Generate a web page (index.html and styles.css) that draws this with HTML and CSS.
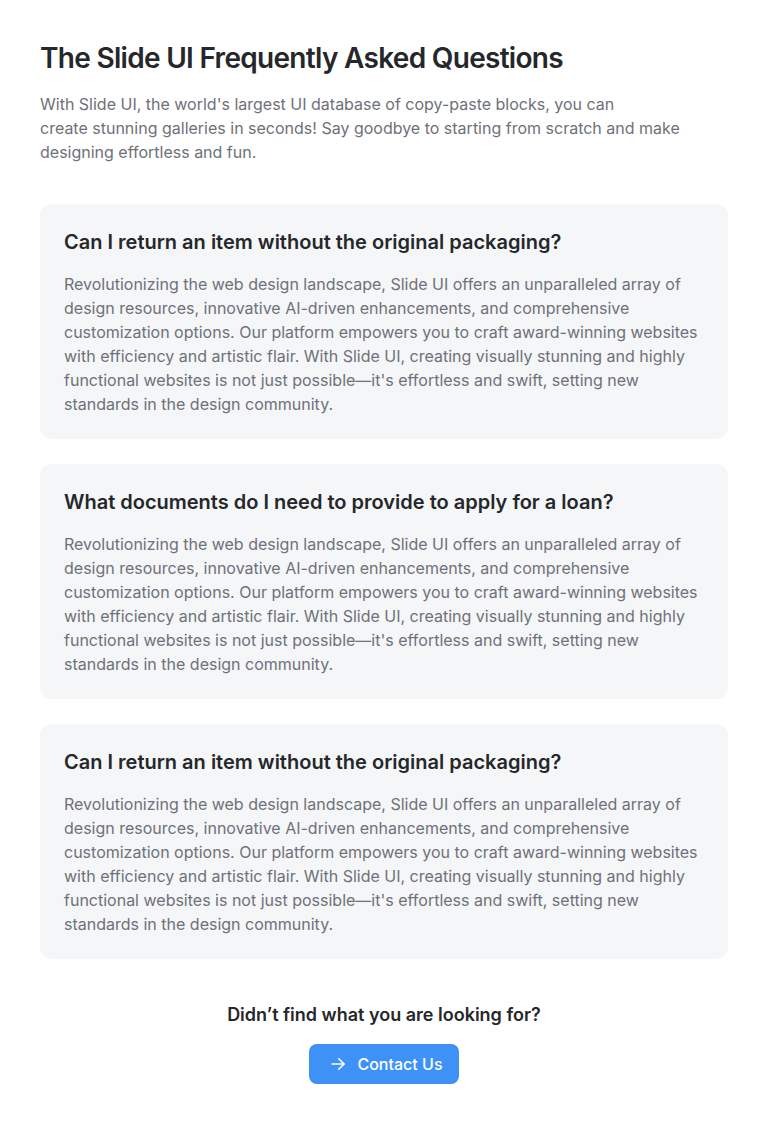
FILE: index.html
```html
<!DOCTYPE html>
<html lang="en">
<head>
<meta charset="utf-8">
<title>FAQ</title>
<link rel="stylesheet" href="styles.css">
</head>
<body>
<main class="page">
  <header class="intro">
    <h1 class="title">The Slide UI Frequently Asked Questions</h1>
    <p class="lead">With Slide UI, the world's largest UI database of copy-paste blocks, you can<br>create stunning galleries in seconds! Say goodbye to starting from scratch and make designing effortless and fun.</p>
  </header>
  <section class="faq-list">
    <article class="faq">
      <h2 class="faq-q">Can I return an item without the original packaging?</h2>
      <p class="faq-a">Revolutionizing the web design landscape, Slide UI offers an unparalleled array of design resources, innovative AI-driven enhancements, and comprehensive customization options. Our platform empowers you to craft award-winning websites with efficiency and artistic flair. With Slide UI, creating visually stunning and highly functional websites is not just possible—it's effortless and swift, setting new standards in the design community.</p>
    </article>
    <article class="faq">
      <h2 class="faq-q">What documents do I need to provide to apply for a loan?</h2>
      <p class="faq-a">Revolutionizing the web design landscape, Slide UI offers an unparalleled array of design resources, innovative AI-driven enhancements, and comprehensive customization options. Our platform empowers you to craft award-winning websites with efficiency and artistic flair. With Slide UI, creating visually stunning and highly functional websites is not just possible—it's effortless and swift, setting new standards in the design community.</p>
    </article>
    <article class="faq">
      <h2 class="faq-q">Can I return an item without the original packaging?</h2>
      <p class="faq-a">Revolutionizing the web design landscape, Slide UI offers an unparalleled array of design resources, innovative AI-driven enhancements, and comprehensive customization options. Our platform empowers you to craft award-winning websites with efficiency and artistic flair. With Slide UI, creating visually stunning and highly functional websites is not just possible—it's effortless and swift, setting new standards in the design community.</p>
    </article>
  </section>
  <footer class="cta">
    <p class="cta-text">Didn’t find what you are looking for?</p>
    <a class="cta-btn" href="#">
      <svg class="cta-icon" width="18" height="18" viewBox="0 0 24 24" fill="none" stroke="currentColor" stroke-width="2.2" stroke-linecap="round" stroke-linejoin="round"><path d="M4 12h16"/><path d="M13 5l7 7-7 7"/></svg>
      <span>Contact Us</span>
    </a>
  </footer>
</main>
</body>
</html>
```
FILE: styles.css
```css
* { box-sizing: border-box; }
html, body { margin: 0; padding: 0; background: #ffffff; }
body {
  font-family: Inter, "Noto Sans", "Liberation Sans", sans-serif;
  color: #25272b;
}
.page {
  padding: 40px 40px 40px;
  display: flex;
  flex-direction: column;
}
.title {
  margin: 0;
  font-size: 28px;
  line-height: 36px;
  font-weight: 600;
  color: #25272b;
  letter-spacing: -0.7px;
}
.lead {
  margin: 16px 0 0;
  max-width: 660px;
  font-size: 16px;
  line-height: 24px;
  color: #6e7179;
}
.faq-list {
  margin-top: 40px;
  display: flex;
  flex-direction: column;
  gap: 25px;
}
.faq {
  background: #f5f6f8;
  border-radius: 12px;
  padding: 24px 24px 23px;
}
.faq-q {
  margin: 0;
  font-size: 20px;
  line-height: 28px;
  font-weight: 600;
  color: #25272b;
}
.faq-a {
  margin: 16px 0 0;
  font-size: 16px;
  line-height: 24px;
  color: #6e7179;
}
.cta {
  margin-top: 42px;
  display: flex;
  flex-direction: column;
  align-items: center;
}
.cta-text {
  margin: 0;
  font-size: 18px;
  line-height: 28px;
  font-weight: 600;
  color: #25272b;
}
.cta-btn {
  margin-top: 15px;
  display: inline-flex;
  align-items: center;
  gap: 10px;
  height: 40px;
  padding: 0 16px 0 20px;
  background: #3e92f6;
  color: #ffffff;
  border-radius: 8px;
  text-decoration: none;
  font-size: 16px;
  line-height: 24px;
  font-weight: 500;
}
.cta-icon { display: block; }
```
